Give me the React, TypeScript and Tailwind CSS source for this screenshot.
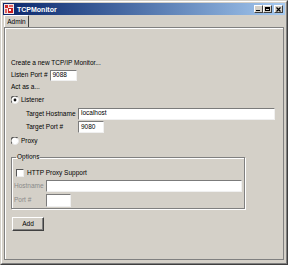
import React from "react";

const sunken =
  "bg-white border border-t-[#7b7b7b] border-l-[#7b7b7b] border-b-[#f0f0f0] border-r-[#f0f0f0] flex items-center pl-[2px] leading-none";

const Radio = ({ checked }: { checked?: boolean }) => (
  <svg width="8" height="8" viewBox="0 0 8 8" className="shrink-0">
    <circle cx="4" cy="4" r="3.5" fill="#fff" />
    <path d="M1 6.5 A3.5 3.5 0 0 1 6.5 1" fill="none" stroke="#555" strokeWidth="1.2" />
    <path d="M6.5 1.5 A3.5 3.5 0 0 1 1.5 6.5" fill="none" stroke="#e8e8e8" strokeWidth="1" />
    {checked && <circle cx="4" cy="4" r="1.4" fill="#111" />}
  </svg>
);

const TitleButton = ({ children }: { children: React.ReactNode }) => (
  <div className="w-[9px] h-[8px] bg-[#d4d0c8] border border-t-white border-l-white border-b-[#404040] border-r-[#404040] flex items-center justify-center">
    {children}
  </div>
);

const App = () => {
  return (
    <div className="w-[288px] h-[265px] bg-[#d4d0c8] border border-t-[#d4d0c8] border-l-[#d4d0c8] border-b-[#404040] border-r-[#404040] font-['Liberation_Sans',Arial,sans-serif] text-[6.5px] text-black select-none">
      <div className="h-full flex flex-col border border-t-white border-l-white border-b-[#808080] border-r-[#808080] p-px">
        {/* Title bar */}
        <div className="h-[12px] flex items-center bg-gradient-to-r from-[#0a246a] to-[#a6caf0] pl-[1px] pr-[2px]">
          <svg width="10" height="10" viewBox="0 0 10 10" className="shrink-0">
            <rect x="0" y="0" width="10" height="10" fill="#f4e4e4" />
            <rect x="1" y="1" width="3" height="3" fill="#d02828" />
            <rect x="5" y="1" width="4" height="2" fill="#e06060" />
            <rect x="1" y="5" width="2" height="4" fill="#e06060" />
            <rect x="4" y="4" width="5" height="5" fill="#c81e1e" />
            <rect x="5" y="5" width="2" height="2" fill="#fff" />
          </svg>
          <span className="ml-[3px] text-white font-bold text-[7px] leading-none">TCPMonitor</span>
          <div className="ml-auto flex items-center">
            <TitleButton>
              <div className="w-[4px] h-[1px] bg-black mt-[3px] -ml-[1px]" />
            </TitleButton>
            <TitleButton>
              <div className="w-[5px] h-[4px] border border-black border-t-2" />
            </TitleButton>
            <div className="ml-[2px]">
              <TitleButton>
                <svg width="5" height="5" viewBox="0 0 5 5">
                  <path d="M0.5 0.5 L4.5 4.5 M4.5 0.5 L0.5 4.5" stroke="#000" strokeWidth="1.2" />
                </svg>
              </TitleButton>
            </div>
          </div>
        </div>

        {/* Tabs */}
        <div className="h-[12px] flex items-end pl-[1px]">
          <div className="h-[12px] w-[25px] border border-b-0 border-t-white border-l-white border-r-[#404040] rounded-t-[1px] flex items-center justify-center">
            Admin
          </div>
        </div>

        {/* Tab panel */}
        <div className="flex-1 mx-px mb-[2px] border border-[#808080] shadow-[inset_1px_1px_0_#ffffff] pt-[29px] pl-[6px] flex flex-col">
          <div className="h-[12px] flex items-center">Create a new TCP/IP Monitor...</div>

          <div className="h-[12px] flex items-center gap-[2px]">
            <span>Listen Port #</span>
            <div className={`${sunken} w-[27px] h-[11px]`}>9088</div>
          </div>

          <div className="h-[12px] flex items-center">Act as a...</div>

          <div className="h-[14px] flex items-center gap-[2px]">
            <Radio checked />
            <span>Listener</span>
          </div>

          <div className="h-[13px] flex items-center pl-[15px]">
            <span className="w-[52px]">Target Hostname</span>
            <div className={`${sunken} w-[197px] h-[12px]`}>localhost</div>
          </div>

          <div className="h-[14px] flex items-center pl-[15px]">
            <span className="w-[52px]">Target Port #</span>
            <div className={`${sunken} w-[26px] h-[12px]`}>9080</div>
          </div>

          <div className="h-[14px] flex items-center gap-[2px]">
            <Radio />
            <span>Proxy</span>
          </div>

          <fieldset className="mt-[3px] w-[234px] border border-[#808080] shadow-[inset_1px_1px_0_#ffffff,1px_1px_0_#ffffff] pl-[2px] pb-[1px]">
            <legend className="ml-[2px] px-[1px] leading-[12px]">Options</legend>
            <div className="h-[12px] flex items-center gap-[3px] pl-[2px] mt-[4px]">
              <div className="w-[8px] h-[8px] bg-white border border-t-[#555] border-l-[#555] border-b-[#eee] border-r-[#eee]" />
              <span>HTTP Proxy Support</span>
            </div>
            <div className="h-[14px] flex items-center">
              <span className="w-[32px] text-[#8a8a8a]">Hostname</span>
              <div className={`${sunken} w-[196px] h-[12px]`} />
            </div>
            <div className="h-[14px] flex items-center">
              <span className="w-[32px] text-[#8a8a8a]">Port #</span>
              <div className={`${sunken} w-[25px] h-[13px]`} />
            </div>
          </fieldset>

          <button className="mt-[8px] ml-px w-[32px] h-[14px] bg-[#d4d0c8] border border-t-white border-l-white border-b-[#404040] border-r-[#404040] shadow-[inset_-1px_-1px_0_#808080] flex items-center justify-center leading-none">
            Add
          </button>
        </div>
      </div>
    </div>
  );
};

export default App;
